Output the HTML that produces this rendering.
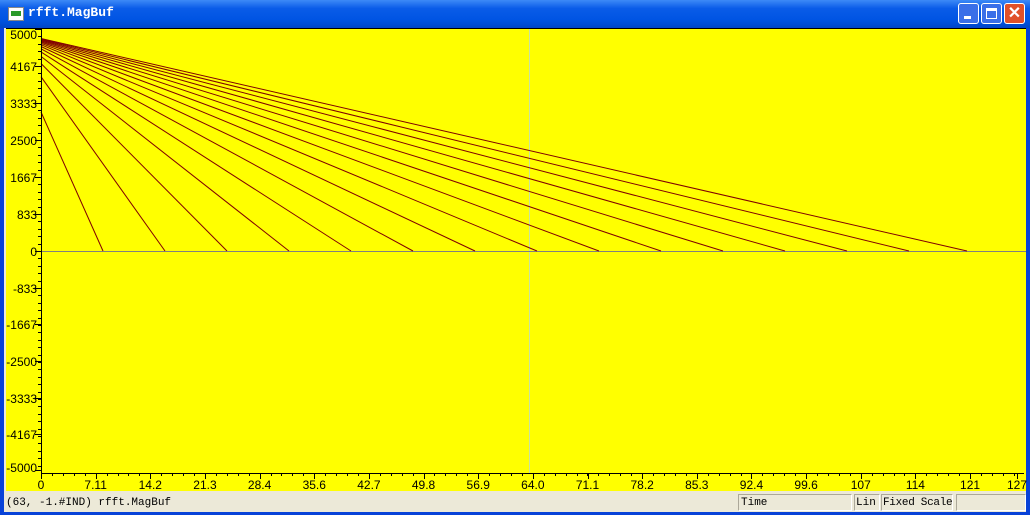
<!DOCTYPE html><html><head><style>
body{margin:0;width:1030px;height:515px;overflow:hidden;background:#0842d8;font-family:"Liberation Sans",sans-serif}
.t{position:absolute;left:0;top:0;width:1030px;height:28px;background:linear-gradient(#3d8af7,#0a5ce8 30%,#0054e3 70%,#0046c8)}
.tt{position:absolute;left:28px;top:5px;color:#fff;font:bold 13px "Liberation Mono",monospace}
.b{position:absolute;top:3px;width:21px;height:21px;border:1px solid #fff;border-radius:3px;box-sizing:border-box;background:#3a6fe8}
.sb{position:absolute;left:4px;top:492px;width:1022px;height:20px;background:#ece9d8;font:11px "Liberation Mono",monospace;white-space:nowrap}
.p{position:absolute;top:2px;height:17px;border:1px solid #aca899;border-right-color:#fff;border-bottom-color:#fff;box-sizing:border-box;padding-left:2px;line-height:16px;overflow:hidden}
</style></head><body>
<div class="t"></div>
<div style="position:absolute;left:8px;top:7px;width:14px;height:12px;background:#fff;border:1px solid #888"><div style="margin:3px 2px;height:5px;background:#2a9a2a"></div></div>
<div class="tt">rfft.MagBuf</div>
<div class="b" style="left:958px"><div style="position:absolute;left:5px;top:12px;width:7px;height:3px;background:#fff"></div></div>
<div class="b" style="left:981px"><div style="position:absolute;left:4px;top:4px;width:11px;height:11px;border:1px solid #fff;border-top-width:3px;box-sizing:border-box"></div></div>
<div class="b" style="left:1004px;background:#e0512a;color:#fff;font:bold 16px sans-serif;text-align:center;line-height:19px">✕</div>
<div style="position:absolute;left:4px;top:28px;width:1022px;height:464px;background:#ece9d8"></div>
<svg style="position:absolute;left:0;top:0" width="1030" height="515">
<rect x="6" y="28" width="1020" height="463" fill="#ff0"/>
<line x1="6" y1="28.5" x2="1026" y2="28.5" stroke="#000"/>
<line x1="529.5" y1="29" x2="529.5" y2="473" stroke="#c8e0a0"/>
<line x1="41" y1="251.5" x2="1026" y2="251.5" stroke="#808080"/>
<g stroke="#800000" fill="none" id="L"></g>
<line x1="41.5" y1="29" x2="41.5" y2="474" stroke="#000"/>
<line x1="41" y1="473.5" x2="1024" y2="473.5" stroke="#000"/>
<g id="T" stroke="#000"></g>
<g id="X" font-size="12" text-anchor="middle" fill="#000"></g>
<g id="Y" font-size="12" text-anchor="end" fill="#000"></g>
</svg>
<div class="sb">
<div class="p" style="left:0;width:733px;border:none;top:3px">(63, -1.#IND)  rfft.MagBuf</div>
<div class="p" style="left:734px;width:114px">Time</div>
<div class="p" style="left:850px;width:26px;padding-left:1px">Lin</div>
<div class="p" style="left:877px;width:72px;padding-left:1px;letter-spacing:-0.3px">Fixed Scale</div>
<div class="p" style="left:952px;width:70px"></div>
</div>
<script>
var L=document.getElementById('L'),s='';
for(var k=1;k<=15;k++){var y=29+83/Math.pow(k,0.8);var x=k==15?967:41+62*k;s+='<line x1="41" y1="'+y+'" x2="'+x+'" y2="251"/>';}
L.innerHTML=s;
var T='',X='',Y='';
var xl=['0','7.11','14.2','21.3','28.4','35.6','42.7','49.8','56.9','64.0','71.1','78.2','85.3','92.4','99.6','107','114','121','127'];
for(var i=0;i<19;i++){var x=i<18?41+i*54.65:1017;X+='<text x="'+x+'" y="489">'+xl[i]+'</text>';T+='<line x1="'+(Math.round(x)+.5)+'" y1="473" x2="'+(Math.round(x)+.5)+'" y2="479"/>';}
for(var x=41;x<1020;x+=10.93){T+='<line x1="'+(Math.round(x)+.5)+'" y1="473" x2="'+(Math.round(x)+.5)+'" y2="476"/>';}
var yl=['5000','4167','3333','2500','1667','833','0','-833','-1667','-2500','-3333','-4167','-5000'];
var yp=[29,66,103,140,177,214,251,288,324,361,398,434,470];
for(var i=0;i<13;i++){var y=yp[i];var ly=i==0?39:(i==12?472:y+5);Y+='<text x="37" y="'+ly+'">'+yl[i]+'</text>';T+='<line x1="35" y1="'+(y+.5)+'" x2="41" y2="'+(y+.5)+'"/>';}
for(var y=29;y<472;y+=7.4){T+='<line x1="38" y1="'+(Math.round(y)+.5)+'" x2="41" y2="'+(Math.round(y)+.5)+'"/>';}
document.getElementById('T').innerHTML=T;document.getElementById('X').innerHTML=X;document.getElementById('Y').innerHTML=Y;
</script>
</body></html>
